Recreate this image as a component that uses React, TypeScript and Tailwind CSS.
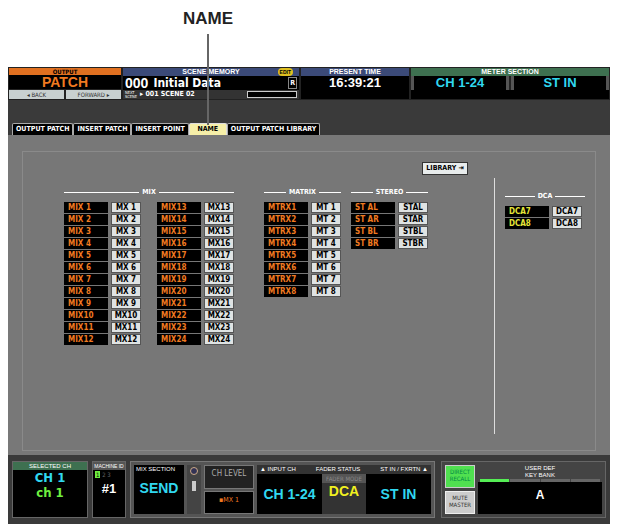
import React from "react";

const F = { fontFamily: '"DejaVu Sans Condensed","DejaVu Sans",sans-serif' };
const A = { fontFamily: '"Liberation Sans",Arial,sans-serif' };

function Cell({ l, n, yellow }: { l: string; n: string; yellow?: boolean }) {
  return (
    <div className="flex h-[12px] gap-[3px] mb-[0px]">
      <div className={`w-[44px] h-[11px] bg-black text-[8px] leading-[11px] font-bold px-[4px] ${yellow ? "text-[#e6e63a]" : "text-[#f07a20]"}`}>{l}</div>
      <div className="w-[30px] h-[11px] bg-[#dfe3e3] border border-[#555] text-[8px] leading-[9px] font-bold text-black text-center">{n}</div>
    </div>
  );
}

function Head({ t, w }: { t: string; w: number }) {
  return (
    <div className="flex items-center gap-[3px] h-[10px] mb-[5px] text-white text-[7px] font-bold" style={{ width: w }}>
      <div className="flex-1 h-[1px] bg-white" />
      <span>{t}</span>
      <div className="flex-1 h-[1px] bg-white" />
    </div>
  );
}

const pad = (i: number) => (i < 10 ? ` ${i}` : `${i}`);

export default function App() {
  const mix1 = Array.from({ length: 12 }, (_, i) => i + 1);
  const mix2 = Array.from({ length: 12 }, (_, i) => i + 13);
  return (
    <div className="w-[618px] h-[529px] bg-white relative overflow-hidden" style={F}>
      <div className="h-[67px] flex pt-[6px] pl-[182px]">
        <div className="text-[17px] font-bold text-[#222] w-[52px] text-center" style={A}>NAME</div>
      </div>
      <div className="absolute left-[207px] top-[34px] w-[2px] h-[91px] bg-[#666] z-10" />
      <div className="mx-[8px] h-[457px] bg-[#3a3a3a] flex flex-col">
        {/* header */}
        <div className="flex h-[33px] gap-[2px] p-[1px] bg-[#222]">
          <div className="w-[112px] flex flex-col">
            <div className="h-[7px] bg-[#e07020] text-[6px] leading-[7px] text-center font-bold text-black">OUTPUT</div>
            <div className="h-[14px] bg-black text-[#f07a20] text-[14px] leading-[14px] text-center font-bold" style={A}>PATCH</div>
            <div className="flex gap-[2px] mt-[1px] h-[9px]">
              <div className="flex-1 bg-[#c8d0d0] text-[6px] leading-[9px] text-center text-[#333]">◂ BACK</div>
              <div className="flex-1 bg-[#c8d0d0] text-[6px] leading-[9px] text-center text-[#333]">FORWARD ▸</div>
            </div>
          </div>
          <div className="w-[176px] flex flex-col">
            <div className="h-[8px] bg-[#3b4a78] text-white text-[7px] leading-[8px] text-center font-bold relative" style={A}>SCENE MEMORY<span className="absolute right-[6px] top-0 bg-[#e0c020] text-black rounded-full px-[2px] text-[5px]">EDIT</span></div>
            <div className="h-[14px] bg-black text-white flex items-center px-[2px] font-bold"><span className="text-[14px]" style={A}>000</span>&nbsp;<span className="text-[12px]">Initial Data</span><span className="ml-auto text-[7px] border border-[#888] px-[1px]">R</span></div>
            <div className="h-[9px] bg-[#333] flex items-center text-white gap-[3px] px-[2px] overflow-hidden"><span className="text-[4px] leading-[4px]">NEXT<br/>SCENE</span><span className="text-[7px] font-bold">▸ 001 SCENE 02</span><span className="ml-auto w-[50px] h-[7px] border border-[#ccc] bg-black" /></div>
          </div>
          <div className="w-[108px] flex flex-col">
            <div className="h-[8px] bg-[#3b4a78] text-white text-[7px] leading-[8px] text-center font-bold" style={A}>PRESENT TIME</div>
            <div className="h-[14px] bg-black text-white text-[13px] leading-[14px] text-center font-bold" style={A}>16:39:21</div>
            <div className="h-[9px] bg-black" />
          </div>
          <div className="flex-1 flex flex-col">
            <div className="h-[8px] bg-[#3e7050] text-white text-[7px] leading-[8px] text-center font-bold" style={A}>METER SECTION</div>
            <div className="h-[14px] flex gap-[2px] text-[#30d8f0] text-[13px] leading-[14px] font-bold" style={A}>
              <div className="flex-1 bg-black text-center border-x-[3px] border-[#555]">CH 1-24</div>
              <div className="flex-1 bg-black text-center border-x-[3px] border-[#555]">ST IN</div>
            </div>
            <div className="h-[9px] bg-black" />
          </div>
        </div>
        {/* tabs */}
        <div className="h-[35px] bg-[#3a3a3a] flex items-end pl-[4px]">
          {["OUTPUT PATCH", "INSERT PATCH", "INSERT POINT", "NAME", "OUTPUT PATCH LIBRARY"].map((t) => (
            <div key={t} className={`h-[12px] text-[7px] leading-[11px] font-bold px-[3px] border border-b-0 rounded-t-[2px] ${t === "NAME" ? "bg-[#f6efa8] text-black w-[38px] text-center border-[#ddd]" : "bg-black text-white border-[#aaa]"}`}>{t}</div>
          ))}
        </div>
        {/* main */}
        <div className="flex-1 bg-[#787878] px-[14px] pt-[16px] pb-[4px] flex flex-col">
          <div className="flex-1 bg-[#777] border border-[#8a8a8a] relative flex">
            <div className="flex-1 pt-[10px] pl-[41px] flex flex-col">
              <div className="h-[13px] bg-[#e8ecec] border border-[#333] text-[7px] font-bold w-[46px] ml-[358px] text-center leading-[11px]">LIBRARY ⇥</div>
              <div className="flex mt-[12px]">
                <div className="flex flex-col">
                  <Head t="MIX" w={170} />
                  <div className="flex gap-[16px]">
                    <div>{mix1.map((i) => <Cell key={i} l={`MIX${pad(i)}`} n={`MX${pad(i)}`} />)}</div>
                    <div>{mix2.map((i) => <Cell key={i} l={`MIX${i}`} n={`MX${i}`} />)}</div>
                  </div>
                </div>
                <div className="flex flex-col ml-[30px]">
                  <Head t="MATRIX" w={77} />
                  {Array.from({ length: 8 }, (_, i) => <Cell key={i} l={`MTRX${i + 1}`} n={`MT ${i + 1}`} />)}
                </div>
                <div className="flex flex-col ml-[10px]">
                  <Head t="STEREO" w={77} />
                  {["AL", "AR", "BL", "BR"].map((s) => <Cell key={s} l={`ST ${s}`} n={`ST${s}`} />)}
                </div>
              </div>
            </div>
            <div className="w-[1px] bg-[#ddd] my-[16px] mt-[26px]" />
            <div className="w-[100px] pt-[39px] pl-[10px] flex flex-col">
              <Head t="DCA" w={80} />
              <Cell l="DCA7" n="DCA7" yellow />
              <Cell l="DCA8" n="DCA8" yellow />
            </div>
          </div>
        </div>
        {/* bottom */}
        <div className="h-[69px] bg-[#3a3a3a] flex gap-[4px] px-[4px] py-[6px] text-white">
          <div className="w-[76px] flex flex-col bg-black border border-[#666]">
            <div className="h-[8px] bg-[#3e7050] text-[6px] leading-[8px] text-center" style={A}>SELECTED CH</div>
            <div className="text-[#30d8f0] text-[13px] font-bold text-center leading-[15px]">CH 1</div>
            <div className="text-[#70f040] text-[13px] font-bold text-center leading-[15px]">ch 1</div>
          </div>
          <div className="w-[34px] flex flex-col bg-black border border-[#666]">
            <div className="h-[8px] bg-[#555] text-[5px] leading-[8px] text-center" style={A}>MACHINE ID</div>
            <div className="text-[6px] px-[2px]"><span className="bg-[#70f040] text-black px-[1px]">1</span> <span className="text-[#666]">2 3</span></div>
            <div className="text-[13px] font-bold text-center" style={A}>#1</div>
          </div>
          <div className="w-[305px] bg-[#555] border border-[#777] flex gap-[3px] p-[3px]">
            <div className="w-[50px] bg-black flex flex-col">
              <div className="text-[6px] px-[2px]" style={A}>MIX SECTION</div>
              <div className="text-[#30d8f0] text-[14px] font-bold text-center mt-[4px]" style={A}>SEND</div>
            </div>
            <div className="w-[14px] bg-[#444] flex flex-col items-center pt-[2px]"><div className="w-[8px] h-[8px] rounded-full bg-[#335] border border-[#ca8]" /><div className="w-[4px] h-[10px] bg-[#ccc] mt-[6px]" /></div>
            <div className="w-[50px] flex flex-col gap-[2px]">
              <div className="flex-1 bg-[#222] border border-[#777] text-[#aaa] text-[8px] text-center leading-[16px]">CH LEVEL</div>
              <div className="flex-1 bg-black border border-[#777] text-[#f07a20] text-[7px] text-center leading-[16px]">▪MX 1</div>
            </div>
            <div className="flex-1 bg-black flex flex-col">
              <div className="h-[9px] flex justify-between text-[6px] px-[3px] bg-[#333]" style={A}><span>▲ INPUT CH</span><span>FADER STATUS</span><span>ST IN / FXRTN ▲</span></div>
              <div className="flex flex-1 items-center">
                <div className="flex-1 text-[#30d8f0] text-[14px] font-bold text-center" style={A}>CH 1-24</div>
                <div className="w-[44px] h-full bg-[#333] flex flex-col items-center"><div className="text-[6px] text-[#888] bg-[#555] w-full text-center">FADER MODE</div><div className="text-[#f0f020] text-[14px] font-bold leading-[16px]" style={A}>DCA</div></div>
                <div className="flex-1 text-[#30d8f0] text-[14px] font-bold text-center" style={A}>ST IN</div>
              </div>
            </div>
          </div>
          <div className="flex-1 bg-[#444] border border-[#666] flex gap-[3px] p-[3px] ml-[2px]">
            <div className="flex flex-col gap-[3px] w-[30px]">
              <div className="flex-1 bg-[#50e050] border border-[#ccc] text-[#084] text-[6px] leading-[7px] text-center pt-[2px]">DIRECT<br/>RECALL</div>
              <div className="flex-1 bg-[#ccc] border border-[#eee] text-[#333] text-[6px] leading-[7px] text-center pt-[2px]">MUTE<br/>MASTER</div>
            </div>
            <div className="flex-1 flex flex-col">
              <div className="text-[6px] leading-[7px] text-center" style={A}>USER DEF<br/>KEY BANK</div>
              <div className="h-[3px] flex gap-[1px] mx-[2px]"><div className="flex-1 bg-[#5e5]" /><div className="flex-1 bg-[#666]" /><div className="flex-1 bg-[#666]" /><div className="flex-1 bg-[#666]" /></div>
              <div className="flex-1 bg-black text-[12px] font-bold text-center leading-[26px]" style={A}>A</div>
            </div>
          </div>
        </div>
      </div>
    </div>
  );
}
